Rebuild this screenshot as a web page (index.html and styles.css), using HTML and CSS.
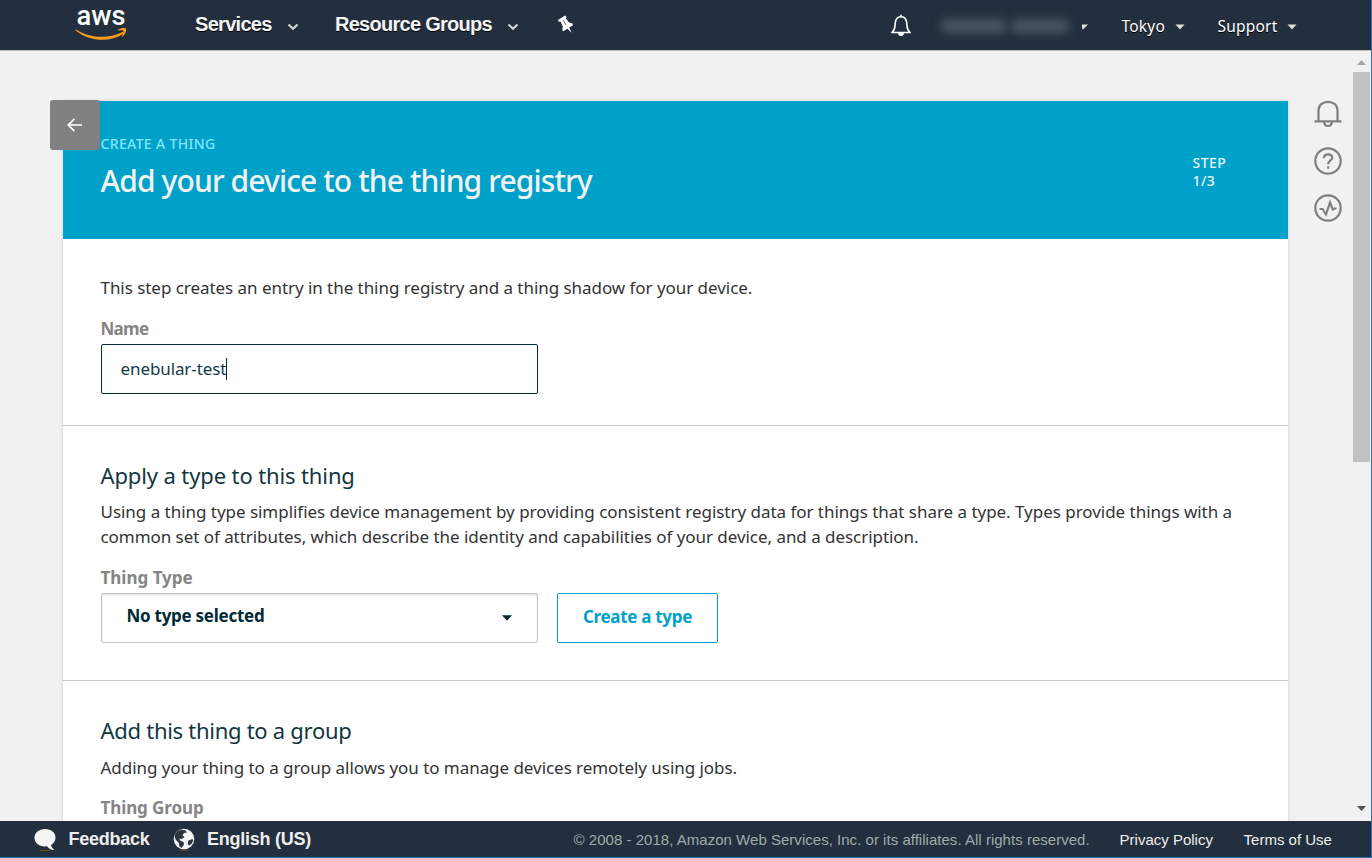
FILE: index.html
```html
<!DOCTYPE html>
<html lang="en">
<head>
<meta charset="utf-8">
<title>Create a thing</title>
<link rel="stylesheet" href="styles.css">
</head>
<body>
<div class="window">
  <header class="topbar">
    <svg class="logo" viewBox="0 -7 54 41" width="54" height="41">
      <text class="logo-word" x="1.500" y="18.200" textLength="49" lengthAdjust="spacingAndGlyphs">aws</text>
      <path d="M1 22.500C15 31.500 33 32 47 25.200C48.500 24.700 49.500 25.600 48.300 26.800C35 36 14 34.500 1 23.800C.4 23 .5 22.300 1 22.500Z" fill="#f79a1e"/>
      <path d="M43 22.700C46 20.600 50 20.600 51 21.600C51.800 23 50.500 27.200 47.700 29.700C47.200 30 46.800 29.800 47.100 29.200C48 27 48.900 24.500 48.300 23.800C47.500 23 44.500 23.400 43.200 23.500C42.700 23.500 42.600 23.100 43 22.700Z" fill="#f79a1e"/>
    </svg>
    <nav class="nav">
      <span class="nav-item services">Services</span>
      <svg class="chev" width="12" height="8" viewBox="0 0 12 8"><path d="M1.500 1.500L6 5.800L10.500 1.500" /></svg>
      <span class="nav-item groups">Resource Groups</span>
      <svg class="chev" width="12" height="8" viewBox="0 0 12 8"><path d="M1.500 1.500L6 5.800L10.500 1.500" /></svg>
      <svg class="pin" width="17" height="19" viewBox="0 0 17 19"><path d="M1 5L8 .5L9.800 2L8.800 3.200L12 7.500L15.500 8.500L16 10.200L12.200 12.600L14.800 17.800L10.300 13.800L6.300 16.300L5.300 15L5.800 11.500L3.500 6.500L1.500 6.700Z" fill="#fff"/><path d="M6 5L9 10" stroke="#56606c" stroke-width=".8"/></svg>
    </nav>
    <div class="account">
      <svg class="bell" width="22" height="23" viewBox="0 0 22 23" fill="none" stroke="#fff" stroke-width="1.600" stroke-linejoin="round"><path d="M1.800 18.500C6 15 4.600 11.500 5.500 7.500C6.300 4.300 8 2.800 11 2.800S15.700 4.300 16.500 7.500C17.400 11.500 16 15 20.200 18.500Z"/><path d="M11 .8V2.500"/><path d="M8.300 19.200A2.700 2.500 0 0 0 13.700 19.200Z" fill="#fff" stroke-width=".8"/></svg>
      <div class="user"><i class="smudge first"></i><i class="smudge last"></i></div>
      <svg class="caret" width="6" height="6" viewBox="4 0 6 6"><path d="M0 .5H10L5 5.500Z"/></svg>
      <span class="menu tokyo">Tokyo</span>
      <svg class="caret" width="10" height="6" viewBox="0 0 10 6"><path d="M.5 .5H9.500L5 5.500Z"/></svg>
      <span class="menu support">Support</span>
      <svg class="caret" width="10" height="6" viewBox="0 0 10 6"><path d="M.5 .5H9.500L5 5.500Z"/></svg>
    </div>
  </header>

  <div class="workspace">
    <main class="card">
      <button class="back" aria-label="Back"><svg width="16" height="14" viewBox="0 0 16 14" fill="none" stroke="#fff" stroke-width="1.700"><path d="M15 7H1M7.500 .8L1.200 7L7.500 13.200"/></svg></button>
      <section class="hero">
        <div>
          <div class="eyebrow"><span>CREATE A THING</span></div>
          <h1><span>Add your device to the thing registry</span></h1>
        </div>
        <div class="step"><span>STEP</span><br>1/3</div>
      </section>
      <section class="block intro">
        <p><span class="t1">This step creates an entry in the thing registry and a thing shadow for your device.</span></p>
        <div class="label"><span class="l1">Name</span></div>
        <div class="input"><span>enebular-test</span><i class="cursor"></i></div>
      </section>
      <section class="block type">
        <h2><span class="h2a">Apply a type to this thing</span></h2>
        <p><span class="t2">Using a thing type simplifies device management by providing consistent registry data for things that share a type. Types provide things with a</span><br><span class="t3">common set of attributes, which describe the identity and capabilities of your device, and a description.</span></p>
        <div class="label"><span>Thing Type</span></div>
        <div class="controls">
          <div class="select"><span>No type selected</span><svg width="10" height="6" viewBox="0 0 10 6"><path d="M0 .3H10L5 5.700Z" fill="#002b36"/></svg></div>
          <button class="create"><span>Create a type</span></button>
        </div>
      </section>
      <section class="block group">
        <h2><span class="h2b">Add this thing to a group</span></h2>
        <p><span class="t4">Adding your thing to a group allows you to manage devices remotely using jobs.</span></p>
        <div class="label"><span class="l3">Thing Group</span></div>
      </section>
    </main>
    <aside class="tools">
      <svg width="28" height="28" viewBox="0 0 28 28"><path d="M4.500 21V10.500C4.500 5 8.500 1.800 14 1.800S23.500 5 23.500 10.500V21M.5 21.300H27.500M10 21.500C10.500 27.500 17.500 27.500 18 21.500"/></svg>
      <svg width="28" height="28" viewBox="0 0 28 28"><circle cx="14" cy="14" r="12.700"/><path d="M10 11.200C10 6.300 18.300 6.300 18.300 10.700C18.300 13.500 14.200 13.500 14.200 17.300M14.200 19.200V21.700"/></svg>
      <svg width="28" height="28" viewBox="0 0 28 28"><circle cx="14" cy="14" r="12.700"/><path d="M5.500 15H8.500L12 20.500L16 8.500L18.800 15.500L20.500 14.500H22.500"/></svg>
    </aside>
    <div class="scrollbar">
      <svg width="9" height="5" viewBox="0 0 9 5"><path d="M0 5L4.500 0L9 5Z" fill="#a3a3a3"/></svg>
      <div class="thumb"></div>
      <svg class="down" width="9" height="5" viewBox="0 0 9 5"><path d="M0 0L4.500 5L9 0Z" fill="#505050"/></svg>
    </div>
  </div>

  <footer class="footer">
    <svg class="bubble" width="22" height="22" viewBox="0 0 22 22"><path d="M11 0C17 0 21.500 3.500 21.500 8.500C21.500 12 19.500 14.500 17 16C17.500 18 18.500 19.500 20.500 21C17 21 14.500 19.500 13 17.300C6 18.300 .5 14.500 .5 8.700C.5 3.500 5 0 11 0Z" fill="#f4f4f4"/><path d="M6 21.500H16" stroke="#6b4b20"/></svg>
    <span class="foot-bold feedback">Feedback</span>
    <svg class="globe" width="22" height="23" viewBox="0 0 22 23"><path d="M7 22.300H15" stroke="#6b4b20"/><circle cx="11" cy="11" r="10.300" fill="#f4f4f4"/><path d="M1.500 7L4 3.500L8 1.500L12.500 2.500L14 4.500L11 5L9.500 7.500L11.500 9L9 11L6.500 10.500L7 12.500L10.500 14L11 16.500L8.500 20L6.500 18.500L5.500 14.500L2.500 11.500Z" fill="#2b3643"/><path d="M15.500 12.500L19.500 11L20.300 12.500L18.500 16L16 17.500L14.500 15.500Z" fill="#2b3643"/></svg>
    <span class="foot-bold english">English (US)</span>
    <span class="copyright">© 2008 - 2018, Amazon Web Services, Inc. or its affiliates. All rights reserved.</span>
    <span class="link privacy">Privacy Policy</span>
    <span class="link terms">Terms of Use</span>
  </footer>
</div>
</body>
</html>
```
FILE: styles.css
```css
* { box-sizing: border-box; }
body { margin: 0; overflow: hidden; font-family: "Noto Sans", sans-serif; background: #f1f1f1; }
.window { width: 1372px; height: 858px; display: flex; flex-direction: column; border-right: 1px solid #2478b8; border-bottom: 1px solid #2478b8; overflow: hidden; }
.window span { white-space: nowrap; }
svg { display: block; flex: none; }
button { font-family: inherit; padding: 0; }

.topbar { height: 50px; flex: none; background: #232f3e; display: flex; color: #fff; box-shadow: 0 1px 0 #b9bcc0; position: relative; z-index: 1; }
.logo { margin: 0 0 0 74.500px; overflow: visible; }
.logo-word { font: 500 27px Roboto, "Noto Sans", sans-serif; fill: #fff; }
.nav { display: flex; margin-left: 66.500px; }
.nav-item { font: bold 20px/24px "Liberation Sans", Arial, sans-serif; margin-top: 12px; color: #f5f5f5; text-shadow: 0 1px 0 #000; }
.services { width: 91.500px; letter-spacing: -.7px; }
.groups { width: 172px; margin-left: 36.500px; letter-spacing: -.73px; }
.chev { margin-top: 23px; fill: none; stroke: #d2d2d2; stroke-width: 2.2; }
.nav .groups + .chev { margin-left: -.5px; }
.pin { margin: 15px 0 0 38px; }
.account { display: flex; margin-left: auto; }
.bell { margin-top: 14px; }
.user { width: 148px; margin-left: 22px; padding: 19px 13px 0 7px; display: flex; gap: 5px; }
.smudge { height: 14px; background: #4b5560; filter: blur(5px); border-radius: 5px; }
.first { width: 66px; }
.last { width: 58px; }
.caret { margin-top: 24px; fill: #dedede; }
.menu { font-size: 15.5px; line-height: 22px; margin-top: 15px; text-shadow: 0 1px 0 #000; letter-spacing: .2px; }
.tokyo { width: 53.500px; margin-left: 33.500px; }
.support { width: 69.500px; margin-left: 32.500px; }
.account > :last-child { margin-right: 74px; }

.workspace { flex: 1; min-height: 0; display: flex; background: #f1f1f1; overflow: hidden; }
.card { position: relative; width: 1225px; height: 780px; margin: 51px 0 0 63px; background: #fff; box-shadow: 0 0 3px rgba(0,0,0,.16); flex: none; }
.back { position: absolute; left: -13px; top: -1px; width: 50px; height: 50px; border: 0; border-radius: 3px; background: #808080; display: flex; align-items: center; justify-content: center; }
.hero { height: 138px; background: #00a1c9; display: flex; justify-content: space-between; padding-left: 37.500px; }
.eyebrow { font-size: 14px; line-height: 20px; margin-top: 33px; font-weight: 500; letter-spacing: .35px; color: #84e5ff; }
h1 { margin: 5px 0 0; font-size: 30px; line-height: 44px; font-weight: 500; letter-spacing: -.89px; color: #f1f3f3; }
.step { width: 95.500px; margin-top: 53px; font-size: 14px; line-height: 18px; font-weight: 500; letter-spacing: .45px; color: #e4f5fa; }
.block { padding-left: 37.500px; border-bottom: 1px solid #c8c8c8; }
.block p { margin: 0; font-size: 17px; line-height: 25px; color: #333; }
.t1, .t3, .t4 { letter-spacing: -.047px; }
.t2 { letter-spacing: -.03px; }
.intro { height: 187px; padding-top: 36px; }
.label { font-size: 17px; line-height: 24px; font-weight: 700; color: #858585; }
.l1 { letter-spacing: -.7px; }
.l3 { letter-spacing: -.1px; }
.intro .label { margin-top: 17px; }
.input { width: 437px; height: 50px; margin-top: 3px; border: 1px solid #002b36; border-radius: 2px; display: flex; align-items: center; padding: 0 0 2px 19px; font-size: 17px; letter-spacing: -.1px; color: #123b48; }
.cursor { width: 1px; height: 22px; background: #002b36; margin: 2px 0 0 -.5px; }
.type { height: 255px; padding-top: 33px; }
h2 { margin: 0; font-size: 22px; line-height: 32px; font-weight: 400; color: #123640; }
.h2a { letter-spacing: -.12px; }
.h2b { letter-spacing: -.28px; }
.type p { margin-top: 8px; }
.type .label { margin-top: 17px; }
.controls { display: flex; gap: 19px; margin-top: 3px; }
.select { width: 437px; height: 50px; border: 1px solid #c4c4c4; border-radius: 2px; box-shadow: inset 0 1px 2px #ddd; display: flex; align-items: center; justify-content: space-between; padding: 0 25px 5px; font-size: 17px; font-weight: 700; letter-spacing: -.27px; color: #002b36; }
.select svg { margin-top: 4px; }
.create { width: 161px; height: 50px; border: 1px solid #00a1c9; border-radius: 2px; background: #fff; color: #00a1c9; font-size: 17px; font-weight: 700; letter-spacing: -.3px; padding: 0 0 3px 1px; }
.group { padding-top: 33px; border: 0; }
.group p { margin-top: 9px; }
.group .label { margin-top: 16px; }

.tools { width: 65px; padding: 50px 0 0 26px; display: flex; flex-direction: column; gap: 19px; }
.tools svg { fill: none; stroke: #7f7f7f; stroke-width: 2.2; }
.scrollbar { width: 17px; display: flex; flex-direction: column; align-items: center; padding-top: 10px; }
.thumb { width: 17px; height: 390px; margin-top: 7px; background: #c1c1c1; }
.down { margin: auto 0 10px; }

.footer { height: 36px; flex: none; background: #232f3e; display: flex; align-items: flex-start; font-family: "Liberation Sans", Arial, sans-serif; color: #eee; }
.bubble { margin: 8px 0 0 34.400px; }
.foot-bold { font-size: 18px; line-height: 22px; font-weight: 700; letter-spacing: -.25px; margin: 7px 0 0 12.100px; }
.feedback { width: 81px; }
.globe { margin: 7px 0 0 23.500px; }
.english { width: 106px; }
.copyright { margin: 9px 0 0 260.500px; width: 517px; font-size: 15px; line-height: 20px; letter-spacing: .025px; color: #a0aaad; }
.link { font-size: 15px; line-height: 20px; margin-top: 9px; }
.privacy { margin-left: 29px; width: 95px; }
.terms { margin-left: 29px; }
```
